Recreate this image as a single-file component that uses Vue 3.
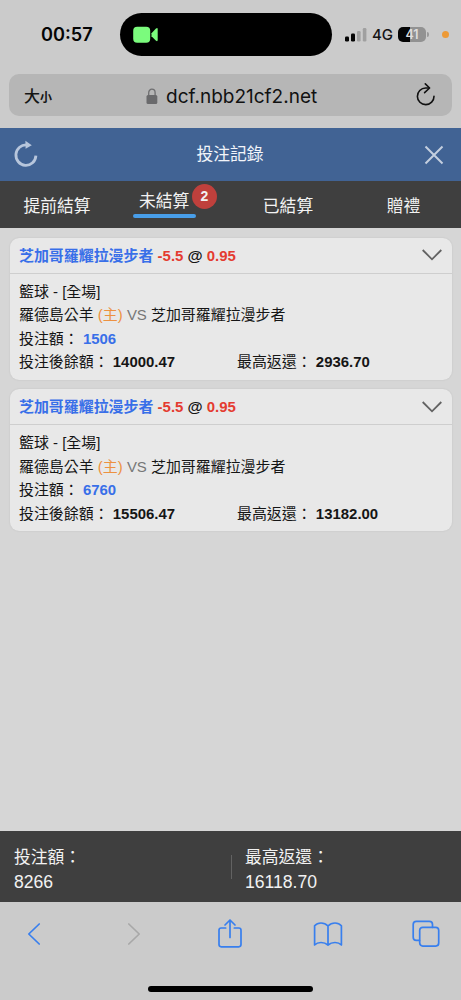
<script setup>
const tabs = [
  { label: '提前結算' },
  { label: '未結算', count: 2, active: true },
  { label: '已結算' },
  { label: '贈禮' },
]

const bets = [
  { id: 1, stake: '1506', balance: '14000.47', payout: '2936.70' },
  { id: 2, stake: '6760', balance: '15506.47', payout: '13182.00' },
]
</script>

<template>
  <div class="phone">
    <div class="status">
      <div class="clock">00:57</div>
      <div class="island">
        <svg width="26" height="18" viewBox="0 0 26 18">
          <rect x="0.2" y="0.8" width="17" height="16" rx="4" fill="#7bfb7d" />
          <path d="M18.5 7.2 L23 2.6 Q24.7 1.2 24.7 3.4 V13.8 Q24.7 16 23 14.7 L18.5 10.2 Z" fill="#7bfb7d" />
        </svg>
      </div>
      <svg class="signal" width="22" height="16" viewBox="0 0 22 16">
        <rect x="0" y="9.5" width="4" height="5" rx="1.2" fill="#050505" />
        <rect x="6" y="6.5" width="4" height="8" rx="1.2" fill="#050505" />
        <rect x="12" y="4" width="3.6" height="10.5" rx="1.2" fill="#a0a0a0" />
        <rect x="17.8" y="1" width="3.6" height="13.5" rx="1.2" fill="#a0a0a0" />
      </svg>
      <div class="network">4G</div>
      <div class="battery">41</div>
      <div class="nub"></div>
      <div class="mic-dot"></div>
    </div>

    <div class="address">
      <div class="text-size">大<small>小</small></div>
      <div class="site">
        <svg width="12" height="17" viewBox="0 0 12 17">
          <path d="M2.7 8 V4.7 A3.2 3.5 0 0 1 9.1 4.7 V8" fill="none" stroke="#6e6e70" stroke-width="1.3" />
          <rect x="0.5" y="7" width="10.8" height="9" rx="1.5" fill="#6a6a6c" />
        </svg>
        <span>dcf.nbb21cf2.net</span>
      </div>
      <svg class="reload" width="22" height="24" viewBox="0 0 22 24">
        <path d="M13.4 5 H10.6 A8.3 8.3 0 1 0 19 13.2" fill="none" stroke="#111" stroke-width="1.6" stroke-linecap="round" />
        <path d="M10.3 0.9 L14.6 5 L9.6 9.6" fill="none" stroke="#111" stroke-width="1.6" stroke-linecap="round" stroke-linejoin="round" />
      </svg>
    </div>

    <header class="header">
      <svg width="26" height="28" viewBox="0 0 26 28">
        <path d="M14 4 A10 10.2 0 1 0 22.9 14.6" fill="none" stroke="#b7c6dc" stroke-width="2.8" />
        <path d="M12.4 -0.2 L18.8 4.2 L12.6 7.7 Z" fill="#b7c6dc" />
      </svg>
      <h1>投注記錄</h1>
      <svg width="20" height="20" viewBox="0 0 20 20">
        <path d="M1.5 1.5 L18.5 18.5 M18.5 1.5 L1.5 18.5" stroke="#c4cfdf" stroke-width="2" />
      </svg>
    </header>

    <nav class="tabs">
      <div v-for="tab in tabs" :key="tab.label" class="tab" :class="{ active: tab.active }">
        <span class="label">{{ tab.label }}</span>
        <span v-if="tab.count" class="badge">{{ tab.count }}</span>
      </div>
    </nav>

    <main class="list">
      <article v-for="bet in bets" :key="bet.id" class="card">
        <div class="pick">
          <div><b class="blue">芝加哥羅耀拉漫步者</b> <b class="red">-5.5</b> <b class="at">@</b> <b class="red">0.95</b></div>
          <svg width="20" height="12" viewBox="0 0 20 12">
            <path d="M0.7 1 L10 10.3 L19.3 1" fill="none" stroke="#626262" stroke-width="1.8" />
          </svg>
        </div>
        <div class="details">
          <div>籃球 - [全場]</div>
          <div>羅德島公羊 <span class="orange">(主)</span> <span class="gray">VS</span> 芝加哥羅耀拉漫步者</div>
          <div>投注額： <b class="blue">{{ bet.stake }}</b></div>
          <div class="amounts">
            <div>投注後餘額： <b>{{ bet.balance }}</b></div>
            <div>最高返還： <b>{{ bet.payout }}</b></div>
          </div>
        </div>
      </article>
    </main>

    <footer class="totals">
      <div><p>投注額：</p><p class="sum">8266</p></div>
      <div class="divider"></div>
      <div><p>最高返還：</p><p class="sum">16118.70</p></div>
    </footer>

    <div class="toolbar">
      <div class="actions">
        <svg width="14" height="24" viewBox="0 0 14 24"><path d="M12.2 2 L1.8 12 L12.2 22" class="line" /></svg>
        <svg width="18" height="24" viewBox="-4 0 18 24"><path d="M1.8 2 L12.2 12 L1.8 22" class="line muted" /></svg>
        <svg width="26" height="32" viewBox="0 0 26 32">
          <path d="M8.7 10 H4.2 Q2 10 2 12.2 V26.6 Q2 28.8 4.2 28.8 H21.8 Q24 28.8 24 26.6 V12.2 Q24 10 21.8 10 H17.3" class="line" />
          <path d="M13 19.5 V2.2 M8 7 L13 2 L18 7" class="line" />
        </svg>
        <svg width="30" height="26" viewBox="0 0 30 26">
          <path d="M15 5 Q12 2 8 2 Q4 2 1.6 4.8 V24 Q4 21.5 8 21.5 Q12 21.5 15 24 Q18 21.5 22 21.5 Q26 21.5 28.4 24 V4.8 Q26 2 22 2 Q18 2 15 5 V24" class="line" />
        </svg>
        <svg width="28" height="28" viewBox="0 0 28 28">
          <path d="M7.5 20.4 H4.3 Q1.2 20.4 1.2 17.3 V4.4 Q1.2 1.3 4.3 1.3 H17.4 Q20.5 1.3 20.5 4.4 V7.3" class="line" />
          <rect x="7.7" y="7.3" width="19" height="18.8" rx="3" class="line" />
        </svg>
      </div>
      <div class="home"></div>
    </div>
  </div>
</template>

<style>
body {
  background: #cbcbcb;
}
</style>

<style scoped>
* {
  box-sizing: border-box;
}
.phone {
  width: 461px;
  height: 1000px;
  display: flex;
  flex-direction: column;
  overflow: hidden;
  background: #cbcbcb;
  font-family: "Liberation Sans", "Noto Sans CJK TC", sans-serif;
  color: #151515;
}
svg {
  display: block;
  flex: none;
  overflow: visible;
}
.status {
  height: 69px;
  flex: none;
  display: flex;
  align-items: center;
  font-family: Inter, sans-serif;
}
.clock {
  width: 79px;
  margin-left: 41px;
  padding-bottom: 1px;
  font-size: 18.2px;
  font-weight: 600;
  color: #050505;
}
.island {
  width: 212px;
  height: 43px;
  border-radius: 22px;
  background: #000;
  display: flex;
  align-items: center;
  padding-left: 13px;
}
.signal {
  margin-left: 13px;
}
.network {
  width: 26px;
  margin-left: 5px;
  font-size: 15px;
  font-weight: 500;
  white-space: nowrap;
}
.battery {
  width: 28px;
  height: 15px;
  border-radius: 5px;
  background: linear-gradient(90deg, #050505 42%, #929292 42%);
  color: #dedede;
  font-size: 12.5px;
  font-weight: 600;
  line-height: 15px;
  text-align: center;
}
.nub {
  width: 2px;
  height: 5px;
  margin-left: 1px;
  border-radius: 0 2px 2px 0;
  background: #999;
}
.mic-dot {
  width: 7px;
  height: 7px;
  margin-left: 13px;
  border-radius: 50%;
  background: #ed9a37;
}
.address {
  height: 42px;
  flex: none;
  margin: 5px 9px 12px 9px;
  border-radius: 10px;
  background: #b6b6b6;
  display: flex;
  align-items: center;
}
.text-size {
  width: 122px;
  margin-left: 15px;
  font-family: "Noto Sans CJK TC", sans-serif;
  font-size: 16px;
  font-weight: 500;
}
.text-size small {
  font-size: 12px;
  font-weight: 700;
}
.site {
  flex: 1;
  display: flex;
  align-items: center;
  gap: 8px;
  padding-top: 2px;
  font-family: Inter, sans-serif;
  font-size: 19px;
  color: #111;
}
.reload {
  margin-right: 15px;
}
.header {
  height: 53px;
  flex: none;
  display: flex;
  align-items: center;
  justify-content: space-between;
  padding: 0 17px 0 13px;
  background: #416394;
  color: #f2f5fa;
}
.header h1 {
  margin: 0 3px 3px 0;
  font-size: 16.8px;
  font-weight: 400;
}
.tabs {
  height: 47px;
  flex: none;
  display: grid;
  grid-template-columns: 114px 116px 116px 115px;
  background: #3f3f3f;
  color: #f2f2f2;
  font-size: 16.8px;
}
.tab {
  display: flex;
  justify-content: center;
  align-items: flex-start;
  line-height: 24px;
  padding-top: 14px;
}
.tab.active {
  justify-content: flex-start;
  padding: 5px 0 0 19px;
}
.active .label {
  display: flex;
  flex-direction: column;
  width: 63px;
  padding-top: 4px;
  text-indent: 6px;
}
.active .label::after {
  content: "";
  height: 4px;
  border-radius: 2px;
  background: #489ee9;
}
.badge {
  width: 25px;
  height: 25px;
  margin: -2px 0 0 -4px;
  border-radius: 50%;
  background: #bf403c;
  font-size: 14px;
  font-weight: 700;
  line-height: 25px;
  text-align: center;
}
.list {
  flex: 1;
  display: flex;
  flex-direction: column;
  gap: 9.5px;
  padding: 9.5px 9px 0 9.5px;
  background: #d6d6d6;
}
.card {
  height: 142px;
  border-radius: 9px;
  background: #e8e8e8;
  box-shadow: 0 0 2px rgba(0, 0, 0, 0.1);
  font-size: 14.95px;
  white-space: nowrap;
}
.pick {
  height: 36px;
  display: flex;
  align-items: center;
  justify-content: space-between;
  padding: 0 10px 0 9.5px;
  border-bottom: 1px solid #cecece;
}
.pick > div {
  padding-bottom: 2px;
}
.at {
  font-size: 15.5px;
}
.details {
  padding: 6px 9.5px;
  line-height: 23.5px;
}
.details > div {
  height: 23.5px;
}
.amounts {
  display: grid;
  grid-template-columns: 218px 1fr;
}
.blue {
  color: #386fe8;
}
.red {
  color: #e43b30;
}
.orange {
  color: #ed9140;
}
.gray {
  color: #777;
}
.totals {
  height: 71px;
  flex: none;
  display: flex;
  align-items: center;
  padding-left: 14px;
  background: #3f3f3f;
  color: #f2f2f2;
  font-size: 16.8px;
  line-height: 24px;
}
.totals > div:first-child {
  width: 217px;
}
.totals p {
  margin: 0;
}
.totals p:first-child {
  padding-top: 6px;
}
.totals .sum {
  font-size: 17.6px;
}
.divider {
  width: 1px;
  height: 24px;
  margin-right: 13px;
  background: #626262;
}
.toolbar {
  height: 98px;
  flex: none;
  display: flex;
  flex-direction: column;
  align-items: center;
  background: #cbcbcb;
}
.actions {
  width: 490px;
  height: 64px;
  flex: none;
  display: grid;
  grid-template-columns: repeat(5, 98px);
  align-items: center;
  justify-items: center;
  padding-right: 2px;
  margin-right: 1px;
}
.line {
  fill: none;
  stroke: #387fee;
  stroke-width: 1.7;
  stroke-linecap: round;
  stroke-linejoin: round;
}
.muted {
  stroke: #a8a8a8;
}
.home {
  width: 165px;
  height: 6px;
  margin-top: 20px;
  border-radius: 3px;
  background: #000;
}
</style>
